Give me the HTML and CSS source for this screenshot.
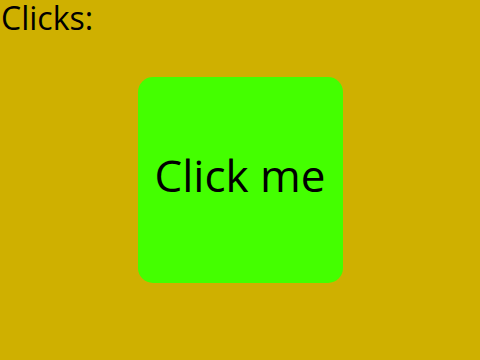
FILE: index.html
```html
<!DOCTYPE html>
<html lang="en">

<head>
        <meta charset="UTF-8">
        <meta name="viewport" content="width=device-width, initial-scale=1.0">
        <title>Clicks</title>
        <link rel="stylesheet" href="styles.css">
</head>

<body>
        <div class="stage">
                <p class="counter">Clicks:<span id="count"></span></p>
                <button class="clicker" onclick="addClick()">Click me</button>
        </div>

        <script>
                // contador de cliques
                let clicks = 0;

                function addClick() {
                        clicks++;
                        document.getElementById('count').textContent = ' ' + clicks;
                }
        </script>
</body>

</html>
```

FILE: styles.css
```css
body {
        font-family: "Open Sans", sans-serif;
        background-color: #cfb000;
        margin: 0;
        padding: 0;
}

.stage {
        display: grid;
        height: 100vh;
}

.counter {
        grid-area: 1 / 1;
        align-self: start;
        justify-self: start;
        margin: 0;
        padding-left: 1px;
        font-size: 32px;
        line-height: 35px;
        color: #000;
}

.clicker {
        grid-area: 1 / 1;
        align-self: center;
        justify-self: center;
        width: 205px;
        height: 206px;
        background-color: #44ff00;
        border: none;
        border-radius: 15px;
        font-family: "Open Sans", sans-serif;
        font-size: 44px;
        color: #000;
        padding: 0 0 10px 0;
        cursor: pointer;
}
```
